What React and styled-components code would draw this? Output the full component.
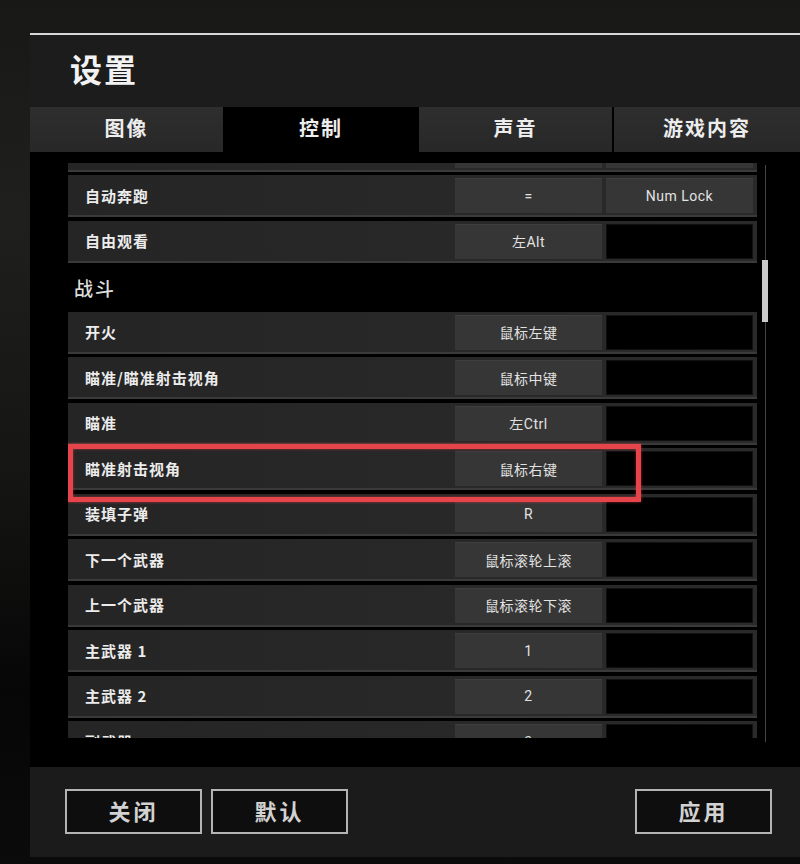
import React from 'react';
import styled, { createGlobalStyle } from 'styled-components';

const GlobalStyle = createGlobalStyle`
  html, body {
    margin: 0;
    padding: 0;
    background: #0b0b0b;
  }
  body {
    font-family: "Noto Sans CJK SC", "Noto Sans", sans-serif;
  }
`;

const Page = styled.div`
  width: 800px;
  height: 864px;
  overflow: hidden;
  display: flex;
  flex-direction: column;
  padding-top: 33px;
  box-sizing: border-box;
  background: linear-gradient(to bottom, #181817 0%, #1f1f1d 25%, #151514 55%, #060606 80%, #0b0b0b 100%);
`;

const Panel = styled.div`
  margin-left: 30px;
  display: flex;
  flex-direction: column;
  border-top: 2px solid #d8d8d8;
`;

const Header = styled.div`
  height: 72px;
  background: #1c1c1c;
  display: flex;
  align-items: center;
  padding: 0 0 6px 40px;
  box-sizing: border-box;
`;

const Title = styled.h1`
  margin: 0;
  font-size: 32px;
  font-weight: 700;
  color: #f2f2f2;
  letter-spacing: 2px;
`;

const Tabs = styled.div`
  display: grid;
  grid-template-columns: 193px 196px 193px 1fr;
  height: 45px;
  background: #000;
`;

const Tab = styled.div`
  display: flex;
  align-items: center;
  justify-content: center;
  padding-bottom: 4px;
  box-sizing: border-box;
  font-size: 20px;
  font-weight: 700;
  color: #ededed;
  letter-spacing: 2px;
  background: ${(p) => (p.$active ? '#000' : 'linear-gradient(to bottom, #2e2e2e, #282828)')};
  margin-left: ${(p) => (p.$gap ? '2px' : '0')};
`;

const Content = styled.div`
  height: 615px;
  background: #000;
  display: flex;
  padding: 11px 0 0 38px;
  box-sizing: border-box;
`;

const Viewport = styled.div`
  width: 689px;
  height: 575px;
  overflow: hidden;
`;

const List = styled.div`
  display: grid;
  grid-auto-rows: 42px;
  row-gap: 3.5px;
  margin-top: -33.5px;
`;

const Row = styled.div`
  position: relative;
  display: grid;
  grid-template-columns: 1fr 147px 147px;
  column-gap: 4px;
  padding-right: 4px;
  background: linear-gradient(to right, #252525, #282828 60%, #2a2a2a);
  border-bottom: 2px solid #3a3a3a;
  box-sizing: border-box;
`;

const Label = styled.div`
  display: flex;
  align-items: center;
  padding-left: 17px;
  font-size: 15px;
  font-weight: 700;
  color: #ececec;
  letter-spacing: 1px;
`;

const Key = styled.div`
  margin: 3px 0 2px;
  display: flex;
  align-items: center;
  justify-content: center;
  font-family: "Roboto", "Noto Sans CJK SC", sans-serif;
  font-size: 14px;
  color: #e2e2e2;
  letter-spacing: 0.5px;
  background: ${(p) => (p.$empty ? '#000' : '#363636')};
  box-shadow: ${(p) => (p.$empty ? 'inset 0 0 0 1px #111' : 'inset 0 1px 0 #3e3e3e')};
`;

const Section = styled.div`
  display: flex;
  align-items: center;
  padding-left: 6px;
  font-size: 19px;
  font-weight: 500;
  color: #dedede;
  letter-spacing: 2px;
`;

const Highlight = styled.div`
  position: absolute;
  z-index: 2;
  left: 0;
  top: -4px;
  width: 573px;
  height: 58px;
  border: 5px solid #e5444b;
  box-sizing: border-box;
  box-shadow: 0 0 3px rgba(229, 68, 75, 0.6), inset 0 0 3px rgba(229, 68, 75, 0.6);
  pointer-events: none;
`;

const ScrollTrack = styled.div`
  width: 6px;
  height: 577px;
  margin-left: 5px;
  margin-top: 2px;
  background: linear-gradient(to right, transparent 3px, #444 3px, #444 4px, transparent 4px);
`;

const ScrollThumb = styled.div`
  width: 6px;
  height: 62px;
  margin-top: 95px;
  background: #cacaca;
`;

const Footer = styled.div`
  height: 90px;
  background: #1b1b1b;
  display: flex;
  align-items: flex-start;
  gap: 9px;
  padding: 22px 28px 0 35px;
  box-sizing: border-box;
`;

const Button = styled.button`
  width: 137px;
  height: 45px;
  padding: 0 0 4px;
  border: 2px solid #b4b4b4;
  background: #0e0e0e;
  color: #d2d2d2;
  font-family: "Noto Sans CJK SC", sans-serif;
  font-size: 22px;
  font-weight: 700;
  letter-spacing: 3px;
  margin-left: ${(p) => (p.$push ? 'auto' : '0')};
  cursor: pointer;
`;

const rows = [
  { label: '', keys: ['', ''], second: true },
  { label: '自动奔跑', keys: ['=', 'Num Lock'] },
  { label: '自由观看', keys: ['左Alt', ''] },
  { section: '战斗' },
  { label: '开火', keys: ['鼠标左键', ''] },
  { label: '瞄准/瞄准射击视角', keys: ['鼠标中键', ''] },
  { label: '瞄准', keys: ['左Ctrl', ''] },
  { label: '瞄准射击视角', keys: ['鼠标右键', ''], marked: true },
  { label: '装填子弹', keys: ['R', ''] },
  { label: '下一个武器', keys: ['鼠标滚轮上滚', ''] },
  { label: '上一个武器', keys: ['鼠标滚轮下滚', ''] },
  { label: '主武器 1', keys: ['1', ''] },
  { label: '主武器 2', keys: ['2', ''] },
  { label: '副武器', keys: ['3', ''] },
];

const tabs = ['图像', '控制', '声音', '游戏内容'];

export default function App() {
  return (
    <Page>
      <GlobalStyle />
      <Panel>
        <Header>
          <Title>设置</Title>
        </Header>
        <Tabs>
          {tabs.map((t, i) => (
            <Tab key={t} $active={i === 1} $gap={i === 3}>
              {t}
            </Tab>
          ))}
        </Tabs>
        <Content>
          <Viewport>
            <List>
              {rows.map((r, i) =>
                r.section ? (
                  <Section key={i}>{r.section}</Section>
                ) : (
                  <Row key={i}>
                    <Label>{r.label}</Label>
                    <Key>{r.keys[0]}</Key>
                    <Key $empty={!r.keys[1] && !r.second}>{r.keys[1]}</Key>
                    {r.marked && <Highlight />}
                  </Row>
                )
              )}
            </List>
          </Viewport>
          <ScrollTrack>
            <ScrollThumb />
          </ScrollTrack>
        </Content>
        <Footer>
          <Button>关闭</Button>
          <Button>默认</Button>
          <Button $push>应用</Button>
        </Footer>
      </Panel>
    </Page>
  );
}
